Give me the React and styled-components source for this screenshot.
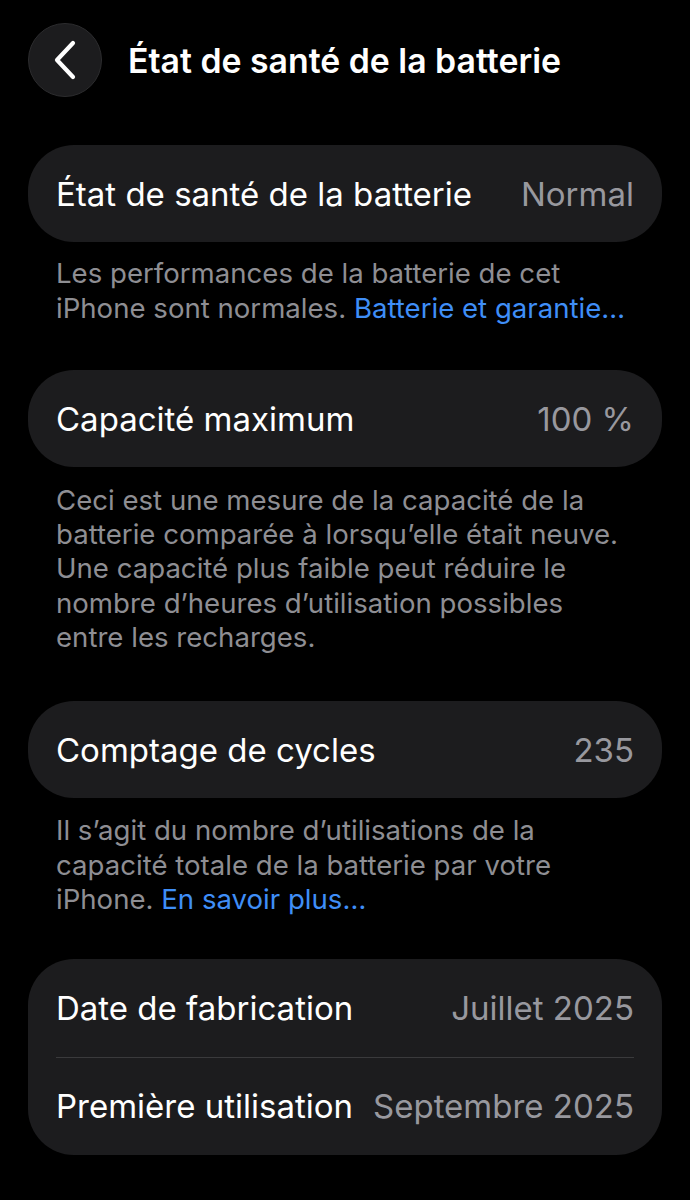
import React from "react";
import styled, { createGlobalStyle } from "styled-components";

const Global = createGlobalStyle`
  html, body { margin: 0; padding: 0; background: #000; }
  body { font-family: Inter, "Noto Sans", "Liberation Sans", sans-serif; -webkit-font-smoothing: antialiased; }
`;

const Page = styled.div`
  width: 690px;
  min-height: 1200px;
  background: #000;
  color: #fff;
  box-sizing: border-box;
  padding: 23px 28px 0;
`;

const Header = styled.header`
  display: flex;
  align-items: center;
  gap: 26px;
  height: 74px;
  margin-bottom: 48px;
`;

const BackButton = styled.button`
  width: 74px;
  height: 74px;
  border-radius: 50%;
  background: #1c1c1e;
  border: 1px solid #2c2c2e;
  box-sizing: border-box;
  display: flex;
  align-items: center;
  justify-content: center;
  padding: 0;
  cursor: pointer;
  flex: none;
`;

const Title = styled.h1`
  margin: 0;
  font-size: 33.8px;
  font-weight: 600;
  letter-spacing: 0;
  color: #fff;
  white-space: nowrap;
`;

const Card = styled.section`
  background: #1c1c1e;
  border-radius: 46px;
  padding: 0 28px;
`;

const Row = styled.div`
  display: flex;
  align-items: center;
  justify-content: space-between;
  gap: 16px;
  height: ${(p) => p.$h || 97}px;
  font-size: 33px;
  letter-spacing: 0;
  & + & { border-top: 1px solid #3a3a3c; }
`;

const Label = styled.span`
  color: #fff;
  white-space: nowrap;
`;

const Value = styled.span`
  color: #98989e;
  white-space: nowrap;
`;

const Footer = styled.p`
  margin: ${(p) => p.$top ?? 14}px 28px ${(p) => p.$bottom ?? 44}px;
  font-size: 27.6px;
  line-height: ${(p) => p.$lh || 34.5}px;
  letter-spacing: 0;
  color: #8e8e93;
`;

const Link = styled.a`
  color: #3f8ef7;
  text-decoration: none;
`;

const Chevron = () => (
  <svg width="30" height="44" viewBox="0 0 30 44" fill="none">
    <path d="M23 5 L7 22 L23 39" stroke="#fff" strokeWidth="4.2" strokeLinecap="round" strokeLinejoin="round" />
  </svg>
);

export default function App() {
  return (
    <>
      <Global />
      <Page>
        <Header>
          <BackButton aria-label="Retour">
            <Chevron />
          </BackButton>
          <Title>État de santé de la batterie</Title>
        </Header>

        <Card>
          <Row>
            <Label>État de santé de la batterie</Label>
            <Value>Normal</Value>
          </Row>
        </Card>
        <Footer $lh={35}>
          Les performances de la batterie de cet iPhone sont normales.{" "}
          <Link>Batterie et garantie…</Link>
        </Footer>

        <Card>
          <Row>
            <Label>Capacité maximum</Label>
            <Value>100 %</Value>
          </Row>
        </Card>
        <Footer $top={16} $bottom={47} $lh={34.2}>
          Ceci est une mesure de la capacité de la batterie comparée à lorsqu’elle était neuve.
          Une capacité plus faible peut réduire le nombre d’heures d’utilisation possibles entre
          les recharges.
        </Footer>

        <Card>
          <Row>
            <Label>Comptage de cycles</Label>
            <Value>235</Value>
          </Row>
        </Card>
        <Footer $top={15} $bottom={42} $lh={34.5}>
          Il s’agit du nombre d’utilisations de la capacité totale de la batterie par votre
          iPhone. <Link>En savoir plus…</Link>
        </Footer>

        <Card>
          <Row $h={98}>
            <Label>Date de fabrication</Label>
            <Value>Juillet 2025</Value>
          </Row>
          <Row $h={97}>
            <Label>Première utilisation</Label>
            <Value>Septembre 2025</Value>
          </Row>
        </Card>
      </Page>
    </>
  );
}
